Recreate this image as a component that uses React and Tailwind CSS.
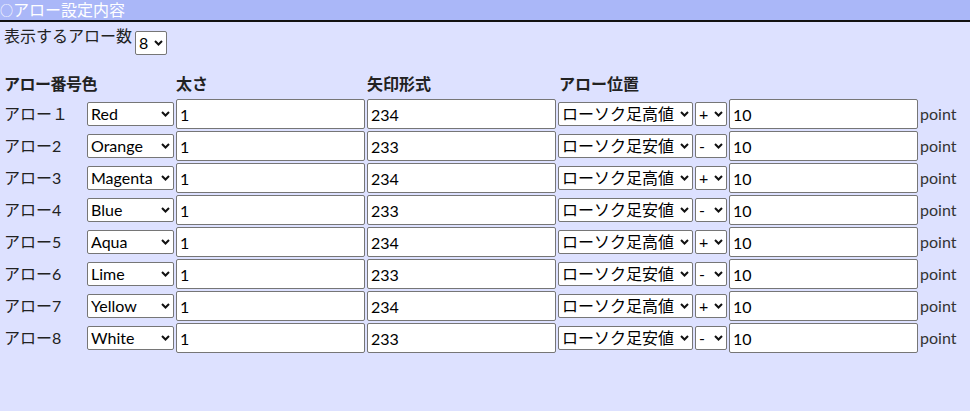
import React from 'react';

const COLORS = ['Red', 'Orange', 'Magenta', 'Blue', 'Aqua', 'Lime', 'Yellow', 'White'];
const POSITIONS = ['ローソク足高値', 'ローソク足安値'];

const arrows = [
  { label: 'アロー１', color: 'Red', width: '1', code: '234', pos: 'ローソク足高値', sign: '+', offset: '10' },
  { label: 'アロー2', color: 'Orange', width: '1', code: '233', pos: 'ローソク足安値', sign: '-', offset: '10' },
  { label: 'アロー3', color: 'Magenta', width: '1', code: '234', pos: 'ローソク足高値', sign: '+', offset: '10' },
  { label: 'アロー4', color: 'Blue', width: '1', code: '233', pos: 'ローソク足安値', sign: '-', offset: '10' },
  { label: 'アロー5', color: 'Aqua', width: '1', code: '234', pos: 'ローソク足高値', sign: '+', offset: '10' },
  { label: 'アロー6', color: 'Lime', width: '1', code: '233', pos: 'ローソク足安値', sign: '-', offset: '10' },
  { label: 'アロー7', color: 'Yellow', width: '1', code: '234', pos: 'ローソク足高値', sign: '+', offset: '10' },
  { label: 'アロー8', color: 'White', width: '1', code: '233', pos: 'ローソク足安値', sign: '-', offset: '10' },
];

function Chevron() {
  return (
    <svg
      width="9"
      height="6"
      viewBox="0 0 9 6"
      className="pointer-events-none absolute right-[4px] top-1/2 -translate-y-1/2"
    >
      <path d="M1 1 L4.5 4.5 L8 1" fill="none" stroke="#111" strokeWidth="2" />
    </svg>
  );
}

function Select({ value, options, className = '' }) {
  return (
    <div className={`relative h-[24px] ${className}`}>
      <select
        defaultValue={value}
        className="h-full w-full appearance-none rounded-[2px] border border-[#767676] bg-white pl-[3px] pr-[14px] leading-[22px] text-black outline-none"
      >
        {options.map((o) => (
          <option key={o} value={o}>
            {o}
          </option>
        ))}
      </select>
      <Chevron />
    </div>
  );
}

function TextBox({ value }) {
  return (
    <input
      type="text"
      defaultValue={value}
      className="h-[30px] w-full rounded-[2px] border border-[#767676] bg-white px-[3px] text-black outline-none"
    />
  );
}

const cols = 'grid grid-cols-[82px_87px_189px_189px_135px_32px_189px_auto] gap-x-[2px] px-[3px]';

export default function App() {
  return (
    <div className="min-h-screen bg-[#dde1ff] text-[16px] text-[#222] font-['Segoe_UI',Lato,'Noto_Sans_CJK_JP',sans-serif]">
      <div className="flex h-[22px] items-center border-b-2 border-[#111] bg-[#aab7f8] leading-[20px] text-white">
        <span className="text-[13px] leading-[20px] font-['Noto_Sans_CJK_JP',sans-serif]">○</span>
        <span>アロー設定内容</span>
      </div>

      <div className="mt-[2px] flex items-start pl-[4px]">
        <span className="leading-[24px]">表示するアロー数</span>
        <Select value="8" options={['1', '2', '3', '4', '5', '6', '7', '8']} className="ml-[3px] mt-[7px] w-[32px]" />
      </div>

      <div className={`${cols} mt-[17px] mb-[3px] h-[24px] items-center font-bold leading-[24px]`}>
        <div className="col-span-2 pl-[1px] tracking-[-0.5px]">アロー番号色</div>
        <div>太さ</div>
        <div>矢印形式</div>
        <div className="col-span-2 pl-[1px]">アロー位置</div>
        <div></div>
        <div></div>
      </div>

      <div className={`${cols} gap-y-[2px]`}>
        {arrows.map((a) => (
          <React.Fragment key={a.label}>
            <div className="flex h-[30px] items-center pl-[1px]">{a.label}</div>
            <Select value={a.color} options={COLORS} className="self-center" />
            <TextBox value={a.width} />
            <TextBox value={a.code} />
            <Select value={a.pos} options={POSITIONS} className="self-center" />
            <Select value={a.sign} options={['+', '-']} className="self-center" />
            <TextBox value={a.offset} />
            <div className="flex h-[30px] items-center text-[#333]">point</div>
          </React.Fragment>
        ))}
      </div>
    </div>
  );
}
